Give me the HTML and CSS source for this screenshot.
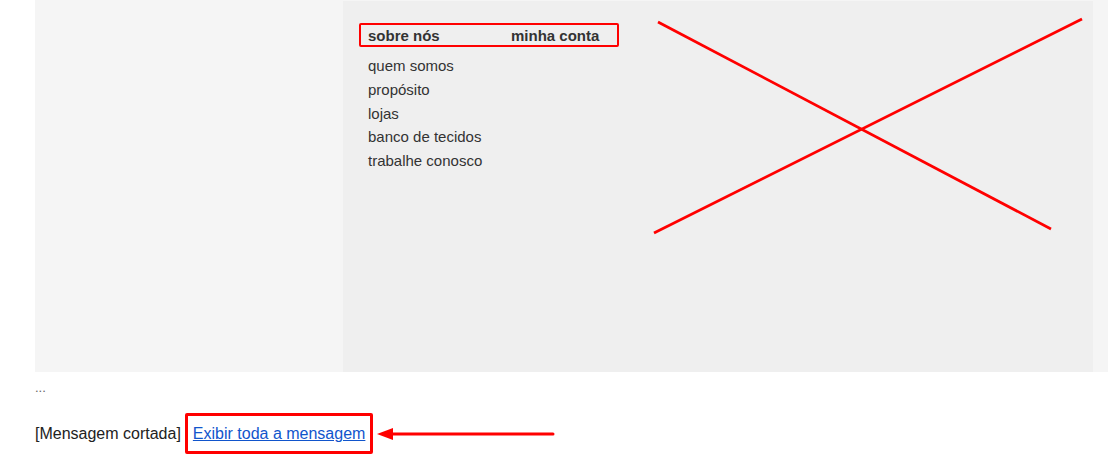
FILE: index.html
```html
<!DOCTYPE html>
<html>
<head>
    <meta charset="utf-8">
    <link rel="stylesheet" href="styles.css">
</head>
<body>
    <div class="mail">
        <div class="inner">
            <div class="menu">
                <div class="menu-head">
                    <span class="head-col">sobre nós</span>
                    <span class="head-col">minha conta</span>
                </div>
                <ul class="menu-links">
                    <li>quem somos</li>
                    <li>propósito</li>
                    <li>lojas</li>
                    <li>banco de tecidos</li>
                    <li>trabalhe conosco</li>
                </ul>
            </div>
            <!-- marcação em X sobre a área vazia -->
            <svg class="cross" width="750" height="371" viewBox="0 0 750 371">
                <line x1="315" y1="21" x2="708" y2="228" stroke="#ff0000" stroke-width="2.7"/>
                <line x1="311" y1="232" x2="739" y2="18" stroke="#ff0000" stroke-width="2.7"/>
            </svg>
        </div>
    </div>

    <div class="ellipsis">...</div>

    <div class="trimmed">
        <span class="trimmed-label">[Mensagem cortada]</span>
        <span class="trimmed-box"><a href="#" class="trimmed-link">Exibir toda a mensagem</a></span>
        <svg class="arrow" width="178" height="14" viewBox="0 0 178 14">
            <polygon points="0,7 16,1 16,13" fill="#ff0000"/>
            <line x1="14" y1="7" x2="176" y2="7" stroke="#ff0000" stroke-width="3" stroke-linecap="round"/>
        </svg>
    </div>
</body>
</html>
```

FILE: styles.css
```css
body { margin:0; background:#fff; font-family:"Liberation Sans", Arial, sans-serif; color:#222; }

.mail { margin-left:35px; height:372px; background-color:#f5f5f5; }
.inner { position:relative; margin-left:308px; width:750px; height:371px; top:1px; background-color:#efefef; }

.menu { padding-left:16px; padding-top:22px; }
.menu-head { display:flex; align-items:center; box-sizing:border-box; width:260px; height:24px; padding-left:7px; border:2px solid #ff0000; border-radius:2px; font-size:15px; font-weight:bold; color:#333; }
.head-col:first-child { width:143px; }
.menu-links { list-style:none; margin:7px 0 0 0; padding-left:9px; font-size:15px; line-height:23.75px; color:#333; }

.cross { position:absolute; left:0; top:0; }

.ellipsis { margin-top:8px; padding-left:35px; font-size:13px; line-height:16px; color:#666; }

.trimmed { display:flex; align-items:center; margin-top:17px; padding-left:35px; font-size:16px; line-height:19px; }
.trimmed-label { margin-right:4px; }
.trimmed-box { padding:8px 5px 8px 5px; border:3px solid #ff0000; border-radius:2px; }
.trimmed-link { color:#15c; text-decoration:underline; }
.arrow { margin-left:4px; }
```
